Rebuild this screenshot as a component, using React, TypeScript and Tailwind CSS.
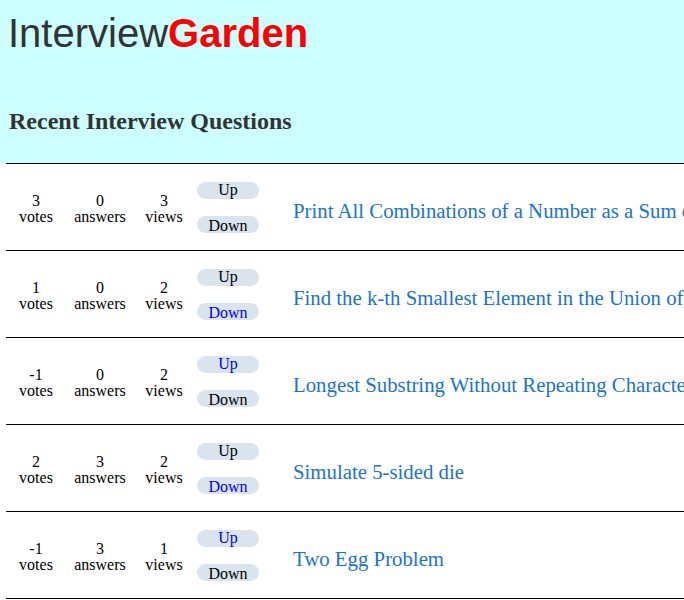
import React from 'react';

const questions = [
  { votes: 3, answers: 0, views: 3, title: 'Print All Combinations of a Number as a Sum of Candidate Numbers', up: false, down: false },
  { votes: 1, answers: 0, views: 2, title: 'Find the k-th Smallest Element in the Union of Two Sorted Arrays', up: false, down: true },
  { votes: -1, answers: 0, views: 2, title: 'Longest Substring Without Repeating Characters', up: true, down: false },
  { votes: 2, answers: 3, views: 2, title: 'Simulate 5-sided die', up: false, down: true },
  { votes: -1, answers: 3, views: 1, title: 'Two Egg Problem', up: true, down: false },
];

const serif = "font-['Liberation_Serif','Times_New_Roman',serif]";

function Stat({ value, label, width }: { value: number; label: string; width: string }) {
  return (
    <div className={`${width} shrink-0 text-center text-[16px] leading-[16px] text-black pt-[4px]`}>
      <div>{value}</div>
      <div>{label}</div>
    </div>
  );
}

export default function App() {
  return (
    <div className={`w-full overflow-hidden bg-white ${serif}`}>
      <header className="bg-[#ccffff] h-[163px] pl-[8px] pt-[10px]">
        <h1 className="font-['Liberation_Sans',Arial,sans-serif] text-[40px] leading-[46px] whitespace-nowrap">
          <span className="text-[#333333]">Interview</span>
          <span className="text-[#ff0000] font-bold">Garden</span>
        </h1>
        <h2 className="mt-[51px] pl-[1px] text-[24px] leading-[28px] font-bold text-[#333333] whitespace-nowrap">
          Recent Interview Questions
        </h2>
      </header>

      <div className="ml-[6px] w-[1000px] border-b border-black">
        {questions.map((q, i) => (
          <div key={i} className="flex items-center h-[87px] border-t border-black whitespace-nowrap">
            <Stat value={q.votes} label="votes" width="w-[60px]" />
            <Stat value={q.answers} label="answers" width="w-[68px]" />
            <Stat value={q.views} label="views" width="w-[60px]" />
            <div className="flex flex-col gap-[17px] ml-[3px] w-[62px] shrink-0">
              <button className={`h-[17px] rounded-full bg-[#d9e4ee] text-[16px] leading-[16px] ${q.up ? 'text-[#0000ee]' : 'text-black'}`}>
                Up
              </button>
              <button className={`h-[17px] rounded-full bg-[#d9e4ee] text-[16px] leading-[19px] ${q.down ? 'text-[#0000ee]' : 'text-black'}`}>
                Down
              </button>
            </div>
            <a className="ml-[34px] pt-[8px] text-[20.8px] text-[#1a74cc]">{q.title}</a>
          </div>
        ))}
      </div>
    </div>
  );
}
